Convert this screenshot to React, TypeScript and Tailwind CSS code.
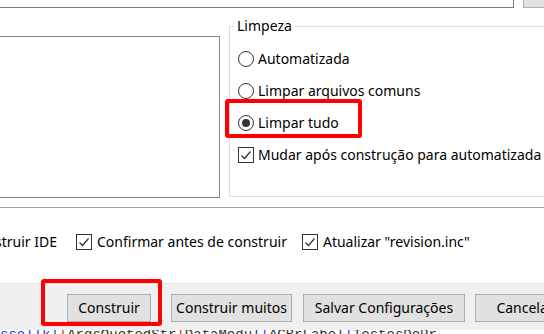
import React from "react";

function Radio({ checked }: { checked?: boolean }) {
  return (
    <span className="w-[16px] h-[16px] shrink-0 rounded-full border border-[#333333] bg-white flex items-center justify-center">
      {checked && <span className="w-[8px] h-[8px] rounded-full bg-[#333333]" />}
    </span>
  );
}

function Check() {
  return (
    <span className="w-[16px] h-[16px] shrink-0 border border-[#333333] bg-white flex items-center justify-center">
      <svg width="14" height="14" viewBox="0 0 14 14">
        <polyline points="2.5,7.5 5.5,10.5 11.5,3.5" fill="none" stroke="#333333" strokeWidth="1.2" />
      </svg>
    </span>
  );
}

function Btn({ w, ml, children }: { w: string; ml: string; children: React.ReactNode }) {
  return (
    <div
      className={`${w} ${ml} h-[28px] shrink-0 bg-[#e1e1e1] border border-[#adadad] flex items-center justify-center whitespace-nowrap`}
    >
      {children}
    </div>
  );
}

export default function App() {
  return (
    <div className="relative w-[544px] h-[334px] overflow-hidden bg-white text-black text-[14px] leading-[20px] font-['Noto_Sans',sans-serif]">
      {/* top bar */}
      <div className="flex h-[8px]">
        <div className="w-[514px] shrink-0 bg-white border-r border-b border-[#7a7a7a]" />
        <div className="ml-[9px] flex-1 bg-[#e1e1e1] border-l border-b border-[#adadad]" />
      </div>

      {/* middle */}
      <div className="flex h-[199px] items-start">
        <div className="mt-[28px] w-[220px] h-[162px] shrink-0 bg-white border-t border-r border-b border-[#828790]" />
        <div className="relative ml-[9px] mt-[18px] h-[171px] flex-1 border-l border-t border-b border-[#dcdcdc]">
          <span className="absolute left-[4px] top-[-11px] px-[3px] bg-white leading-[20px]">Limpeza</span>
          <div className="flex flex-col pt-[16px] pl-[8px]">
            <div className="flex items-center h-[32px] gap-[4px]">
              <Radio />
              <span>Automatizada</span>
            </div>
            <div className="flex items-center h-[32px] gap-[4px]">
              <Radio />
              <span>Limpar arquivos comuns</span>
            </div>
            <div className="flex items-center h-[32px] gap-[4px]">
              <Radio checked />
              <span>Limpar tudo</span>
            </div>
            <div className="flex items-center h-[32px] gap-[4px] whitespace-nowrap">
              <Check />
              <span>Mudar após construção para automatizada</span>
            </div>
          </div>
        </div>
      </div>

      {/* separator */}
      <div className="h-px bg-[#a0a0a0]" />

      {/* checkbox row */}
      <div className="h-[75px] pt-[26px]">
        <div className="flex items-center h-[16px] whitespace-nowrap">
          <div className="w-[57px] shrink-0 overflow-hidden flex justify-end">
            <span className="shrink-0">Construir IDE</span>
          </div>
          <div className="ml-[19px] flex items-center gap-[5px]">
            <Check />
            <span>Confirmar antes de construir</span>
          </div>
          <div className="ml-[15px] flex items-center gap-[5px]">
            <Check />
            <span>Atualizar "revision.inc"</span>
          </div>
        </div>
      </div>

      {/* bottom panel */}
      <div className="h-[47px] bg-[#f0f0f0] border-t border-[#e3e3e3] pt-[10px] flex whitespace-nowrap">
        <Btn w="w-[84px]" ml="ml-[67px]">Construir</Btn>
        <Btn w="w-[121px]" ml="ml-[20px]">Construir muitos</Btn>
        <Btn w="w-[162px]" ml="ml-[11px]">Salvar Configurações</Btn>
        <Btn w="w-[100px]" ml="ml-[10px]">Cancelar</Btn>
      </div>

      {/* code strip */}
      <div className="h-[4px] bg-white overflow-hidden">
        <div className="-mt-[3px] flex whitespace-nowrap text-[14px] leading-[16px] font-['Liberation_Mono',monospace]">
          <span className="text-[#1a3fcf] underline">ssellkl</span>
          <span className="text-[#d02020]">|</span>
          <span className="text-[#333333]">ArgsQuotedStr</span>
          <span className="text-[#d02020]">|</span>
          <span className="text-[#333333]">DataModul</span>
          <span className="text-[#1a3fcf]">|</span>
          <span className="text-[#333333]"> ACBrLabel</span>
          <span className="text-[#1a3fcf]">|</span>
          <span className="text-[#333333]"> TestesDePr</span>
        </div>
      </div>

      {/* red highlight overlays */}
      <div className="absolute left-[225px] top-[99px] w-[137px] h-[39px] border-[4px] border-[#ff0000] rounded-[3px]" />
      <div className="absolute left-[41px] top-[279px] w-[121px] h-[47px] border-[4px] border-[#ff0000] rounded-[3px]" />
    </div>
  );
}
